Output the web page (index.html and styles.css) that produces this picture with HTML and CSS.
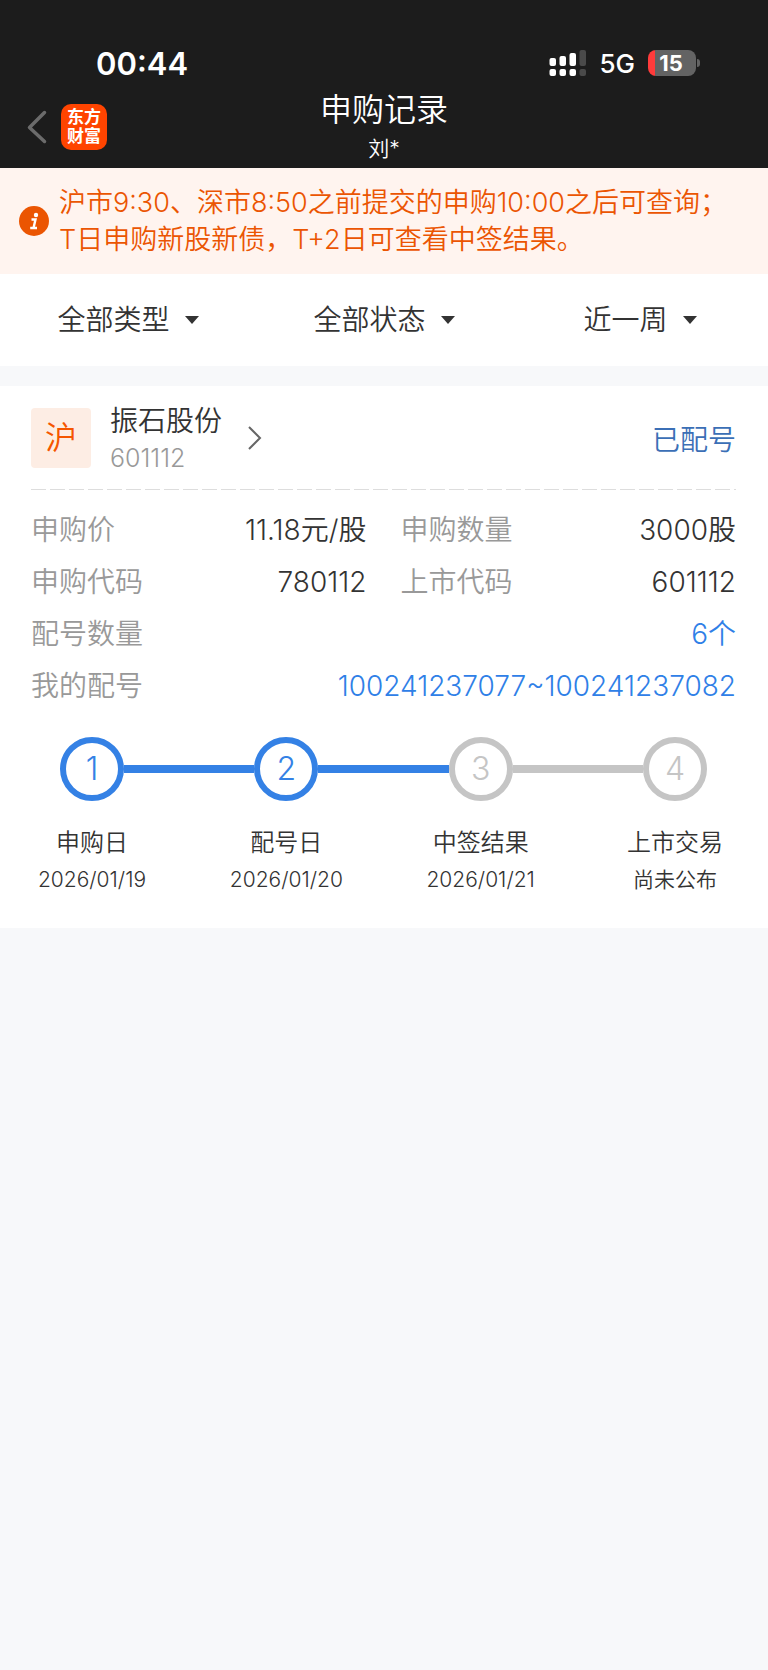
FILE: index.html
```html
<!DOCTYPE html>
<html lang="zh-CN">
  <head>
    <meta charset="UTF-8" />
    <meta name="viewport" content="width=device-width, initial-scale=1.0" />
    <title>申购记录</title>
    <link rel="stylesheet" href="styles.css">
  </head>
  <body>
    <header class="header">
      <div class="status_bar">
        <span class="time">00:44</span>
        <div class="status_icons">
          <svg class="signal" width="38" height="26" viewBox="0 0 38 26" fill="#fff">
            <rect x="0.5" y="8" width="6.5" height="8" rx="2"/>
            <rect x="10.5" y="6" width="6.5" height="10" rx="2"/>
            <rect x="20.5" y="3" width="6.5" height="13" rx="2"/>
            <rect x="0.5" y="19" width="6.5" height="7" rx="2"/>
            <rect x="10.5" y="19" width="6.5" height="7" rx="2"/>
            <rect x="20.5" y="19" width="6.5" height="7" rx="2"/>
            <rect x="30.5" y="0" width="6.5" height="16" rx="2" fill="#4a4a4a"/>
            <rect x="30.5" y="19" width="6.5" height="7" rx="2" fill="#4a4a4a"/>
          </svg>
          <span class="network">5G</span>
          <div class="battery"><span class="battery_level">15</span></div>
        </div>
      </div>
      <nav class="nav">
        <div class="nav_left">
          <a class="back" href="#" aria-label="返回">
            <svg width="20" height="34" viewBox="0 0 20 34" fill="none" stroke="#6b6b6b" stroke-width="3.5" stroke-linecap="round" stroke-linejoin="round">
              <path d="M17.5 2.5 2.5 17.5 17.5 31.5"/>
            </svg>
          </a>
          <a class="logo" href="#">东方<br>财富</a>
        </div>
        <div class="nav_title">
          <h1>申购记录</h1>
          <p>刘*</p>
        </div>
      </nav>
    </header>

    <div class="notice">
      <svg class="notice_icon" width="30" height="30" viewBox="0 0 30 30">
        <circle cx="15" cy="15" r="15" fill="#eb5502"/>
        <circle cx="17" cy="9" r="2.2" fill="#fff"/>
        <path d="M12.5 13.5H16.5L14.5 22M11.2 22H18" fill="none" stroke="#fff" stroke-width="2.4"/>
      </svg>
      <p>沪市9:30、深市8:50之前提交的申购10:00之后可查询；<br>T日申购新股新债，T+2日可查看中签结果。</p>
    </div>

    <div class="filters">
      <div class="filter">
        <select aria-label="类型">
          <option>全部类型</option>
          <option>新股</option>
          <option>新债</option>
        </select>
      </div>
      <div class="filter">
        <select aria-label="状态">
          <option>全部状态</option>
          <option>已配号</option>
          <option>已中签</option>
        </select>
      </div>
      <div class="filter">
        <select aria-label="时间">
          <option>近一周</option>
          <option>近一月</option>
          <option>近一年</option>
        </select>
      </div>
    </div>

    <main class="card">
      <div class="card_top">
        <span class="market">沪</span>
        <a class="stock" href="#">
          <span>
            <span class="stock_name">振石股份</span>
            <span class="stock_code">601112</span>
          </span>
          <svg width="14" height="24" viewBox="0 0 14 24" fill="none" stroke="#666" stroke-width="2">
            <path d="M1 1 12 12 1 23"/>
          </svg>
        </a>
        <span class="state">已配号</span>
      </div>

      <dl class="info">
        <div class="info_item"><dt>申购价</dt><dd>11.18元/股</dd></div>
        <div class="info_item"><dt>申购数量</dt><dd>3000股</dd></div>
        <div class="info_item"><dt>申购代码</dt><dd>780112</dd></div>
        <div class="info_item"><dt>上市代码</dt><dd>601112</dd></div>
        <div class="info_item wide"><dt>配号数量</dt><dd><a href="#">6个</a></dd></div>
        <div class="info_item wide"><dt>我的配号</dt><dd><a href="#">100241237077~100241237082</a></dd></div>
      </dl>

      <div class="steps">
        <div class="step done">
          <span class="circle">1</span>
          <span class="step_name">申购日</span>
          <span class="step_date">2026/01/19</span>
        </div>
        <div class="line done"></div>
        <div class="step done">
          <span class="circle">2</span>
          <span class="step_name">配号日</span>
          <span class="step_date">2026/01/20</span>
        </div>
        <div class="line done"></div>
        <div class="step">
          <span class="circle">3</span>
          <span class="step_name">中签结果</span>
          <span class="step_date">2026/01/21</span>
        </div>
        <div class="line"></div>
        <div class="step">
          <span class="circle">4</span>
          <span class="step_name">上市交易</span>
          <span class="step_date">尚未公布</span>
        </div>
      </div>
    </main>
  </body>
</html>
```
FILE: styles.css
```css
*{
    margin: 0;
    padding: 0;
    box-sizing: border-box;
}
body{
    background-color: #f7f8fa;
    color: #333;
    font-family: Inter, "Noto Sans CJK SC", sans-serif;
    font-size: 28px;
    font-weight: 350;
}
a{
    color: #2f80e7;
    text-decoration: none;
}

/* header */
.header{
    padding: 38px 0 2px;
    background-color: #1c1c1c;
    color: #fff;
}
.status_bar{
    display: flex;
    justify-content: space-between;
    align-items: center;
    height: 50px;
    padding: 0 72px 0 96px;
}
.time{
    font-size: 31px;
    font-weight: 600;
}
.status_icons{
    display: flex;
    align-items: center;
}
.network{
    margin: 0 13px 0 12px;
    font-size: 26px;
    font-weight: 500;
}
.battery{
    position: relative;
    width: 48px;
    height: 26px;
    border-radius: 8px;
    background: linear-gradient(to right, #ff3b3b 7px, #636363 7px);
}
.battery::after{
    content: "";
    position: absolute;
    top: 9px;
    right: -4px;
    width: 3px;
    height: 8px;
    border-radius: 0 4px 4px 0;
    background-color: #636363;
}
.battery_level{
    display: block;
    padding-right: 2px;
    font-size: 22px;
    font-weight: 700;
    line-height: 26px;
    text-align: center;
}
.nav{
    display: grid;
    grid-template-columns: 1fr auto 1fr;
    align-items: center;
}
.nav_left{
    display: flex;
    align-items: center;
    gap: 14px;
    padding-left: 27px;
}
.back{
    display: flex;
}
.logo{
    width: 46px;
    height: 46px;
    padding-top: 4px;
    border-radius: 10px;
    background-color: #ff4400;
    color: #fff;
    font-size: 17px;
    font-weight: 700;
    line-height: 19px;
    text-align: center;
}
.nav_title{
    text-align: center;
}
.nav_title h1{
    font-size: 32px;
    font-weight: 350;
    line-height: 44px;
}
.nav_title p{
    font-size: 21px;
    line-height: 34px;
}

/* notice */
.notice{
    display: flex;
    align-items: center;
    gap: 10px;
    padding: 16px 19px;
    background-color: #fff4ef;
    color: #eb5502;
    font-size: 27px;
    line-height: 37px;
}
.notice_icon{
    flex-shrink: 0;
}

/* filters */
.filters{
    display: grid;
    grid-template-columns: repeat(3, 1fr);
    margin-bottom: 20px;
    background-color: #fff;
}
.filter{
    display: flex;
    justify-content: center;
    align-items: center;
    gap: 14px;
    height: 92px;
}
.filter::after{
    content: "";
    border: 7px solid transparent;
    border-top: 8px solid #333;
    border-bottom: none;
}
.filter select{
    appearance: none;
    border: none;
    background: none;
    color: #333;
    font: inherit;
}

/* card */
.card{
    padding: 0 32px 31px 31px;
    background-color: #fff;
}
.card_top{
    display: flex;
    align-items: center;
    height: 104px;
    background: repeating-linear-gradient(to right, #ddd 0 15px, transparent 15px 19px) bottom / 100% 1px no-repeat;
}
.market{
    width: 60px;
    height: 60px;
    border-radius: 4px;
    background-color: #fdede4;
    color: #f55600;
    font-size: 32px;
    line-height: 60px;
    text-align: center;
}
.stock{
    display: flex;
    align-items: center;
    gap: 26px;
    margin-left: 19px;
    color: #333;
}
.stock_name{
    display: block;
    line-height: 40px;
}
.stock_code{
    display: block;
    color: #999;
    font-size: 25px;
    font-weight: 300;
    line-height: 34px;
}
.state{
    margin-left: auto;
    color: #3b6fb6;
}
.info{
    display: grid;
    grid-template-columns: 1fr 1fr;
    column-gap: 34px;
    padding: 14px 0 25px;
    line-height: 52px;
}
.info_item{
    display: flex;
    justify-content: space-between;
}
.info_item dt{
    color: #999;
}
.wide{
    grid-column: 1 / -1;
}

/* steps */
.steps{
    display: flex;
}
.step{
    display: flex;
    flex-direction: column;
    align-items: center;
    width: 122px;
}
.circle{
    width: 64px;
    height: 64px;
    margin-bottom: 22px;
    border: 6px solid #c5c5c5;
    border-radius: 50%;
    color: #c5c5c5;
    font-size: 32px;
    font-weight: 300;
    line-height: 52px;
    text-align: center;
}
.step.done .circle{
    border-color: #3481e5;
    color: #3481e5;
}
.step_name{
    font-size: 24px;
    line-height: 40px;
}
.step_date{
    font-size: 21px;
    line-height: 34px;
}
.line{
    flex: 1;
    height: 8px;
    margin: 28px -29px 0;
    background-color: #c5c5c5;
}
.line.done{
    background-color: #3481e5;
}
```
